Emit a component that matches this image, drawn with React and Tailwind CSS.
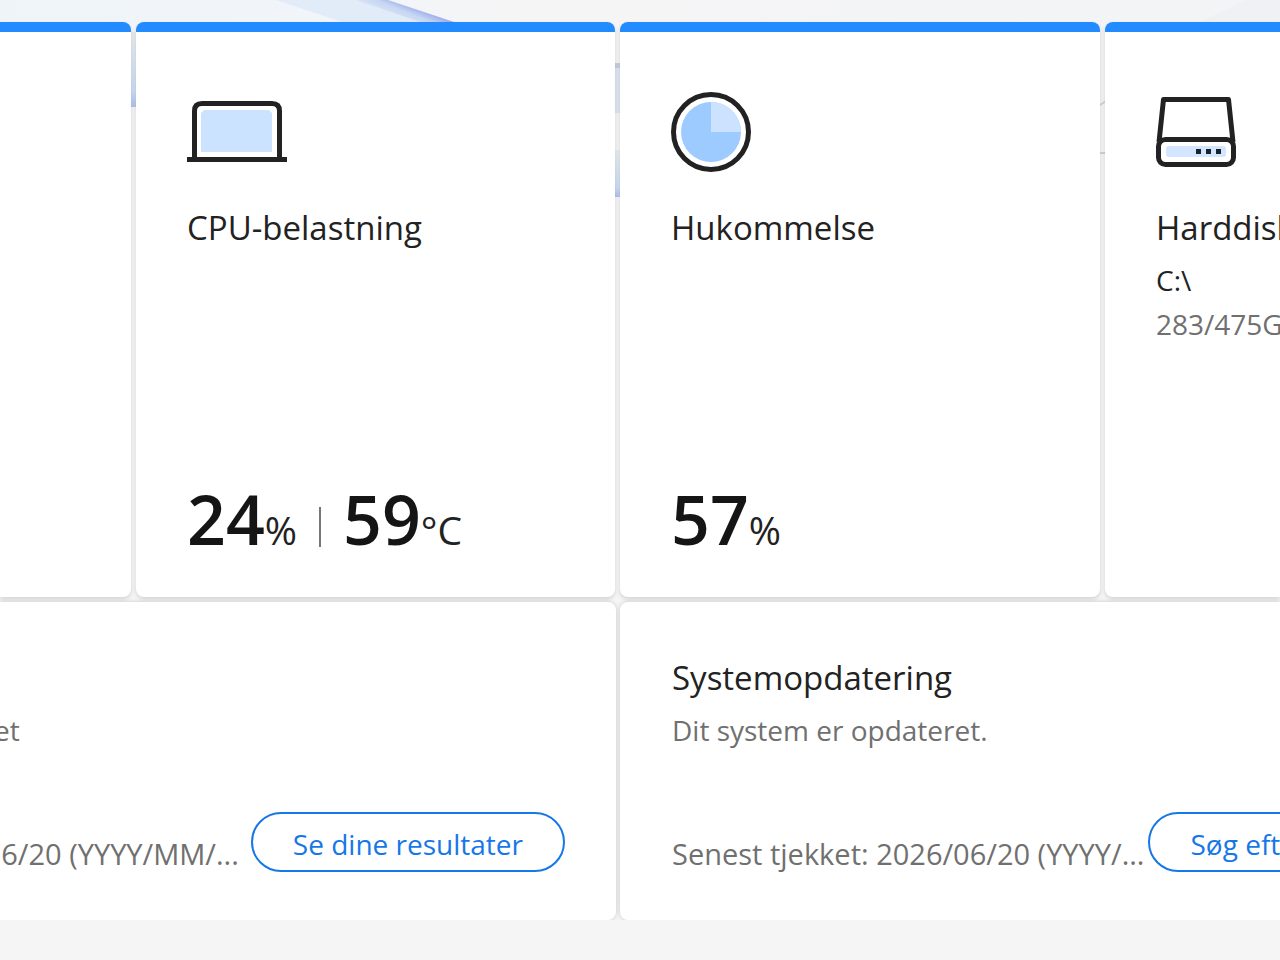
import clsx from 'clsx'

function Wallpaper() {
  return (
    <svg className="absolute inset-x-0 top-0 h-[600px] w-full" viewBox="0 0 1280 600" preserveAspectRatio="none" aria-hidden="true">
      <defs>
        <linearGradient id="sky" x1="0" x2="1">
          <stop offset="0" stopColor="#eff4f8" />
          <stop offset="0.22" stopColor="#f1f5fa" />
          <stop offset="0.4" stopColor="#f5f5f6" />
          <stop offset="1" stopColor="#f3f4f6" />
        </linearGradient>
        <linearGradient id="fold" gradientUnits="userSpaceOnUse" x1="420" y1="8" x2="412" y2="28">
          <stop offset="0" stopColor="#98a8e8" />
          <stop offset="0.4" stopColor="#c6d5f2" />
          <stop offset="1" stopColor="#e0ebf8" />
        </linearGradient>
        <linearGradient id="edge" x1="0" x2="0" y1="0" y2="1">
          <stop offset="0" stopColor="#e9edef" />
          <stop offset="0.8" stopColor="#ccdcf4" />
          <stop offset="1" stopColor="#b0c2ec" />
        </linearGradient>
      </defs>
      <rect width="1280" height="24" fill="url(#sky)" />
      <path d="M276 0 L342 22 L452 22 L386 0 Z" fill="#e2ecf8" />
      <path d="M356 0 L420 22 L454 22 L388 0 Z" fill="url(#fold)" />
      <path d="M1200 22 L1246 0 L1280 0 L1280 22 Z" fill="#f0f1f4" />
      <rect x="130" y="32" width="7" height="75" fill="url(#edge)" />
      <rect x="614" y="63" width="7" height="50" fill="#dfe5f4" />
      <rect x="614" y="63" width="7" height="5" fill="#c6d0e2" />
      <rect x="614" y="150" width="7" height="47" fill="url(#edge)" />
      <path d="M1100 105 L1106 101 M1100 153 H1106" stroke="#cfd2d8" strokeWidth="2" />
    </svg>
  )
}

function LaptopIcon() {
  return (
    <svg width="100" height="80" viewBox="0 0 100 80" fill="none" aria-hidden="true">
      <path d="M14 21 L17 18 H82 L85 21 V60 H14 Z" fill="#cbe3ff" />
      <path d="M7.500 66 V19 Q7.500 11.500 15 11.500 H85 Q92.500 11.500 92.500 19 V66" stroke="#222" strokeWidth="5" />
      <path d="M0 67.500 H100" stroke="#222" strokeWidth="5" />
    </svg>
  )
}

function MemoryIcon() {
  return (
    <svg width="80" height="80" viewBox="0 0 80 80" fill="none" aria-hidden="true">
      <circle cx="40" cy="40" r="37.500" stroke="#222" strokeWidth="5" />
      <circle cx="40" cy="40" r="30" fill="#9dcaff" />
      <path d="M40 40 V10 A30 30 0 0 1 70 40 Z" fill="#cbe3ff" />
    </svg>
  )
}

function DiskIcon() {
  return (
    <svg width="80" height="80" viewBox="0 0 80 80" fill="none" aria-hidden="true">
      <rect x="10" y="54" width="60" height="11" rx="3" fill="#d4e6ff" />
      <path d="M3 50 L7.500 7.500 H72.500 L77 50" stroke="#222" strokeWidth="5" strokeLinejoin="round" />
      <rect x="2.500" y="47.500" width="75" height="25" rx="7" stroke="#222" strokeWidth="5" />
      <path d="M40 57 h5 v5 h-5 z M50 57 h5 v5 h-5 z M60 57 h5 v5 h-5 z" fill="#16242c" />
    </svg>
  )
}

function StatCard({ icon, title, children, className }) {
  return (
    <section
      className={clsx(
        'flex h-[575px] min-w-0 flex-col overflow-hidden rounded-lg border-t-10 border-[#218bff] bg-white whitespace-nowrap shadow-[0_2px_4px_rgba(0,0,0,0.14)]',
        className
      )}
    >
      {title && (
        <div className="flex flex-1 flex-col pt-[60px] pb-[18px] pl-[51px]">
          <div className="flex h-20 items-center">{icon}</div>
          <h2 className="mt-8 text-[33px] leading-12">{title}</h2>
          {children}
        </div>
      )}
    </section>
  )
}

function Value({ amount, unit }) {
  return (
    <span>
      <span className="text-[68px] font-semibold text-[#151515]">{amount}</span>
      <span className="text-[39px]">{unit}</span>
    </span>
  )
}

function PillButton({ children }) {
  return (
    <button
      type="button"
      className="h-[60px] shrink-0 rounded-full border-2 border-[#1677e8] bg-white px-10 pt-1 text-[28px] text-[#1677e8]"
    >
      {children}
    </button>
  )
}

export default function App() {
  return (
    <div className="relative min-h-screen overflow-hidden bg-[#f5f5f5] font-['Segoe_UI','Open_Sans',sans-serif] text-[#222]">
      <Wallpaper />
      <main className="relative pt-[22px]">
        <div className="grid grid-cols-[131fr_479fr_480fr_175fr] gap-[5px]">
          <StatCard className="rounded-l-none" />
          <StatCard icon={<LaptopIcon />} title="CPU-belastning">
            <p className="mt-auto flex items-center leading-20">
              <Value amount="24" unit="%" />
              <span className="mx-[22px] mb-1 h-10 w-[2px] bg-[#777]" />
              <Value amount="59" unit="°C" />
            </p>
          </StatCard>
          <StatCard icon={<MemoryIcon />} title="Hukommelse">
            <p className="mt-auto leading-20">
              <Value amount="57" unit="%" />
            </p>
          </StatCard>
          <StatCard icon={<DiskIcon />} title="Harddisk" className="rounded-r-none">
            <p className="mt-[6px] text-[28px] leading-11">C:\</p>
            <p className="text-[28px] leading-11 text-[#707070]">283/475GB</p>
          </StatCard>
        </div>

        <div className="mt-[5px] grid grid-cols-[616fr_660fr] gap-1 whitespace-nowrap">
          <section className="flex h-[318px] min-w-0 flex-col overflow-hidden rounded-r-lg bg-white pt-[52px] pr-[51px] pb-12 shadow-[0_0_4px_rgba(0,0,0,0.18)]">
            <p className="-ml-[6px] mt-[54px] text-[28px] leading-11 text-[#707070]">et</p>
            <div className="mt-auto flex items-end justify-end gap-3">
              <p className="text-[29px] leading-9 text-[#707070]">6/20 (YYYY/MM/...</p>
              <PillButton>Se dine resultater</PillButton>
            </div>
          </section>
          <section className="flex h-[318px] min-w-0 flex-col overflow-hidden rounded-l-lg bg-white pt-[52px] pb-12 pl-[52px] shadow-[0_0_4px_rgba(0,0,0,0.18)]">
            <h2 className="text-[33px] leading-12">Systemopdatering</h2>
            <p className="mt-[6px] text-[28px] leading-11 text-[#707070]">Dit system er opdateret.</p>
            <div className="mt-auto flex items-end gap-1">
              <p className="text-[29px] leading-9 text-[#707070]">Senest tjekket: 2026/06/20 (YYYY/...</p>
              <PillButton>Søg efter opdateringer</PillButton>
            </div>
          </section>
        </div>
      </main>
      <footer className="relative h-10 bg-[#f5f5f5]" />
    </div>
  )
}
